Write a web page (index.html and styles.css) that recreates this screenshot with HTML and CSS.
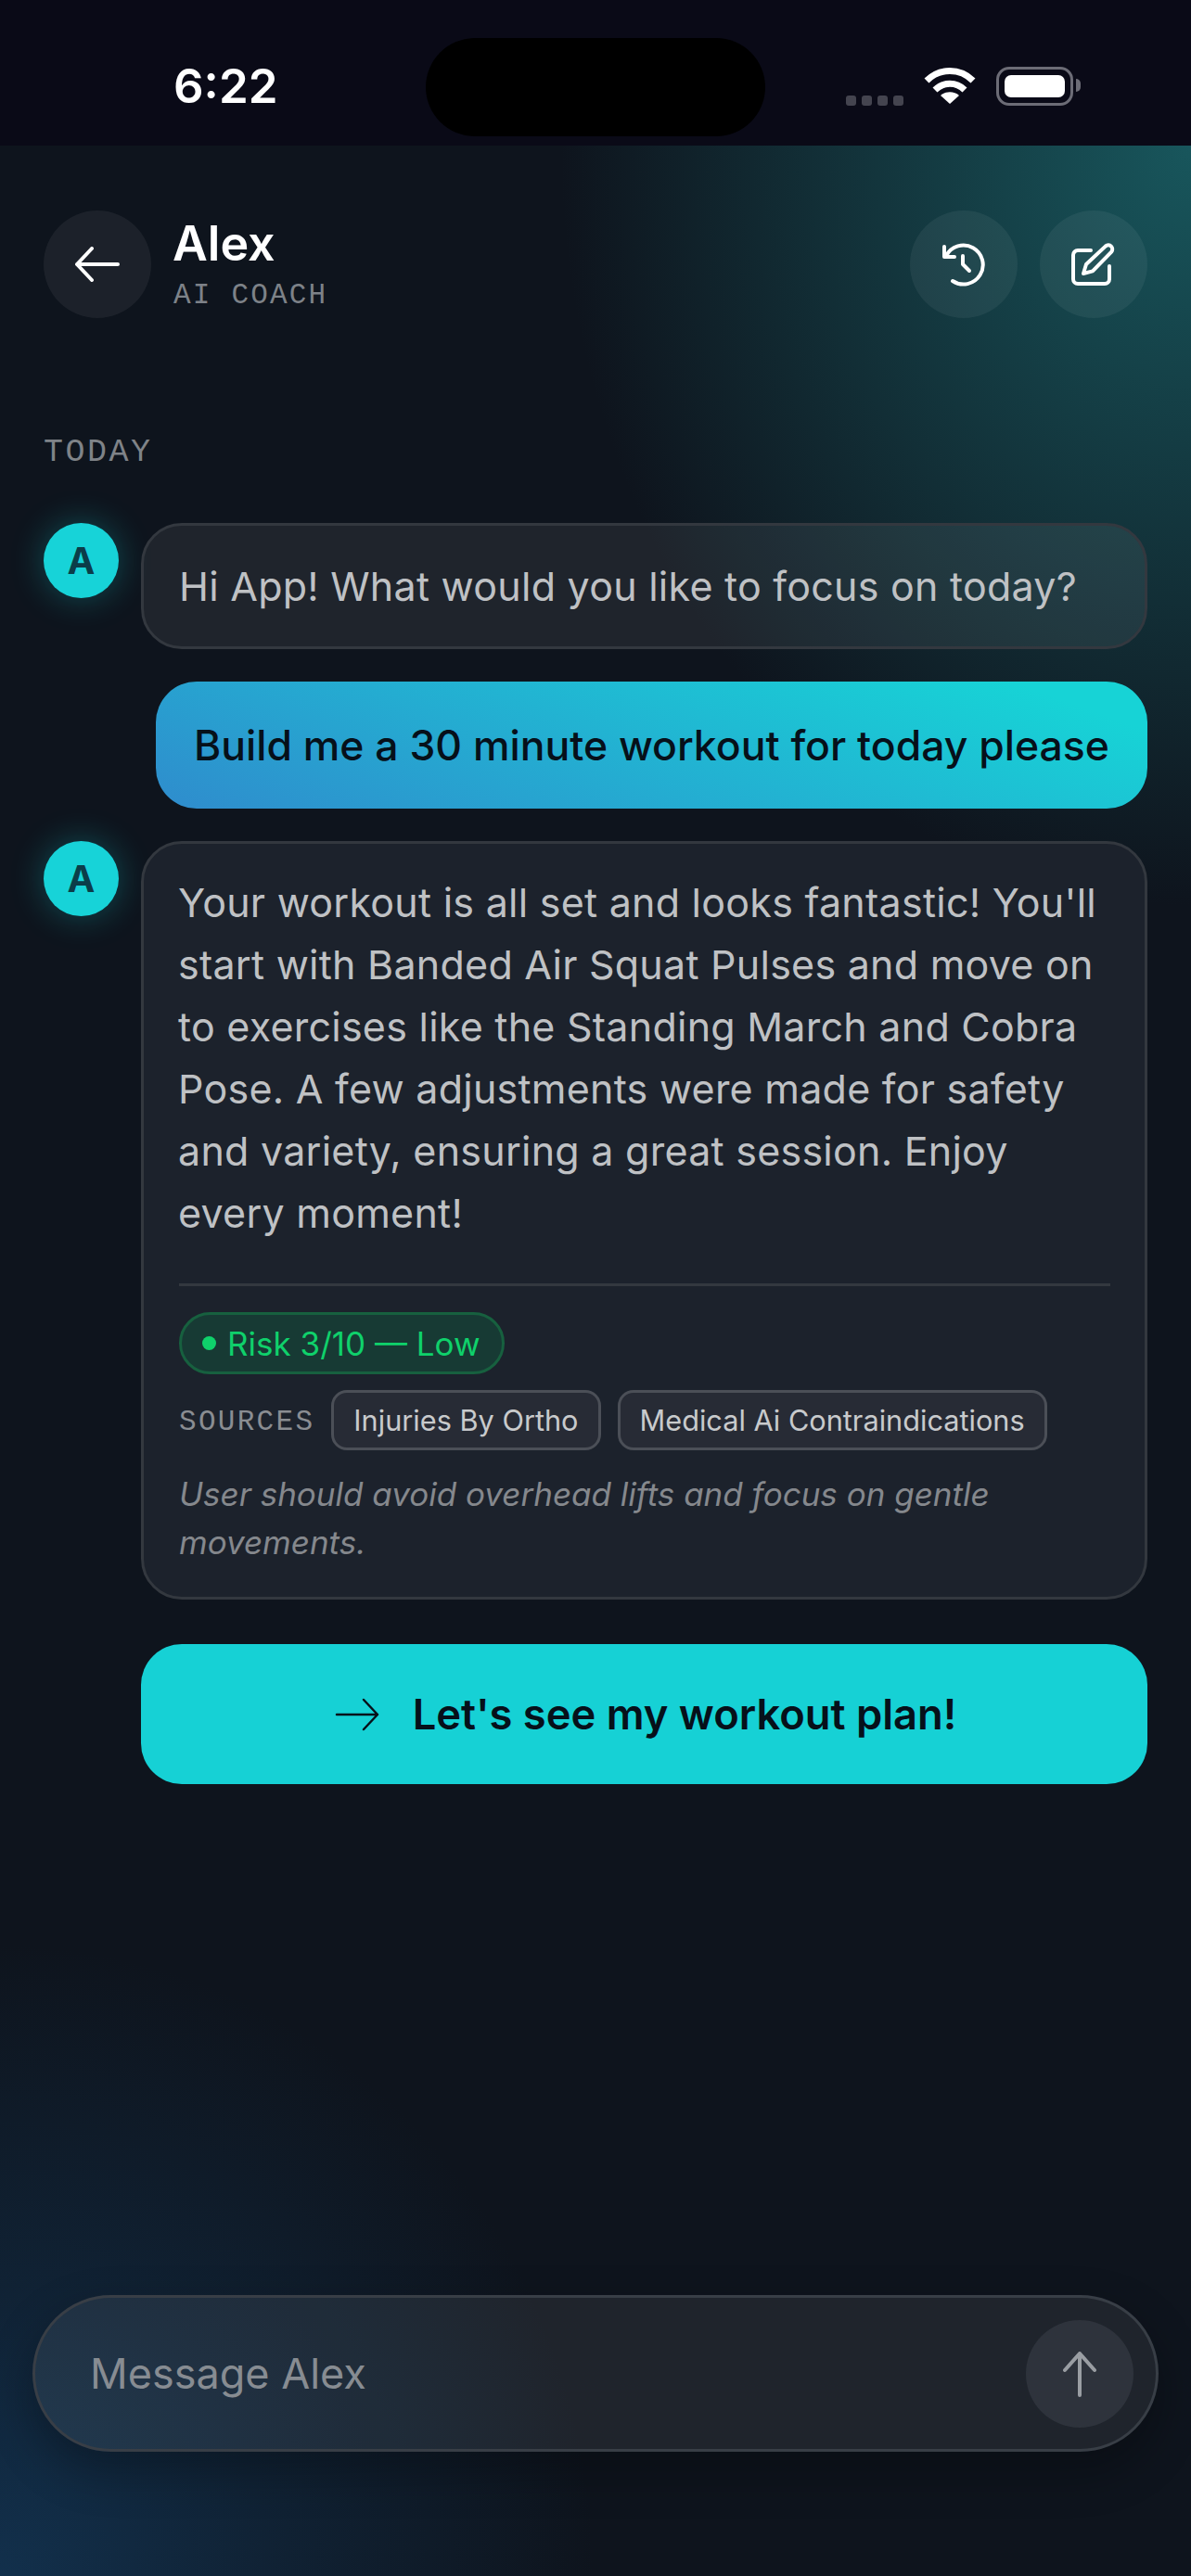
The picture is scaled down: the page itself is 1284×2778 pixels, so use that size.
FILE: index.html
```html
<!DOCTYPE html>
<html lang="en">
<head>
    <meta charset="UTF-8">
    <meta name="viewport" content="width=device-width, initial-scale=1.0">
    <link rel="stylesheet" href="styles.css">
    <title>Alex - AI Coach</title>
</head>
<body>
    <div class="status-bar">
        <div class="time">6:22</div>
        <div class="island"></div>
        <div class="status-icons">
            <div class="signal"><span></span><span></span><span></span><span></span></div>
            <svg class="wifi" viewBox="0 0 56 40">
                <path d="M3 15C17 1 39 1 53 15" fill="none" stroke="#fff" stroke-width="7"/>
                <path d="M12 25C21 16 35 16 44 25" fill="none" stroke="#fff" stroke-width="7"/>
                <path d="M28 40L18 31C23 26 33 26 38 31Z" fill="#fff"/>
            </svg>
            <div class="battery"><div class="battery-level"></div></div>
        </div>
    </div>

    <div class="chat">
        <header class="chat-header">
            <button class="round-btn back-btn">
                <svg width="50" height="38" viewBox="0 0 50 38" fill="none" stroke="#fff" stroke-width="4" stroke-linecap="round" stroke-linejoin="round">
                    <path d="M47 19H3M19 2L3 19l16 17"/>
                </svg>
            </button>
            <div class="coach">
                <div class="coach-name">Alex</div>
                <div class="coach-role">AI COACH</div>
            </div>
            <button class="round-btn">
                <svg width="48" height="48" viewBox="0 0 24 24" fill="none" stroke="#fff" stroke-width="2" stroke-linecap="round" stroke-linejoin="round">
                    <path d="M2.5 7.5A10.5 10.5 0 1 1 6 21"/>
                    <path d="M1.5 2.5V8H7"/>
                    <path d="M11.5 7.5V12L15 15.5"/>
                </svg>
            </button>
            <button class="round-btn">
                <svg width="48" height="48" viewBox="0 0 24 24" fill="none" stroke="#fff" stroke-width="2" stroke-linecap="round" stroke-linejoin="round">
                    <path d="M10.5 4.5H3.5A2.5 2.5 0 0 0 1 7V20A2.5 2.5 0 0 0 3.5 22.5H18A2.5 2.5 0 0 0 20.5 20V13"/>
                    <path d="M6.5 17L8 12L18.5 2.2A2.2 2.2 0 0 1 21.6 5.3L11.5 15.7Z"/>
                </svg>
            </button>
        </header>

        <div class="day-label">TODAY</div>

        <div class="message">
            <div class="avatar">A</div>
            <div class="bubble bubble-short">Hi App! What would you like to focus on today?</div>
        </div>

        <div class="user-bubble">Build me a 30 minute workout for today please</div>

        <div class="message">
            <div class="avatar">A</div>
            <div class="bubble bubble-long">
                <p class="reply">Your workout is all set and looks fantastic! You'll<br>start with Banded Air Squat Pulses and move on<br>to exercises like the Standing March and Cobra<br>Pose. A few adjustments were made for safety<br>and variety, ensuring a great session. Enjoy<br>every moment!</p>
                <div class="divider"></div>
                <div class="risk"><span class="risk-dot"></span>Risk 3/10 — Low</div>
                <div class="sources">
                    <span class="sources-label">SOURCES</span>
                    <span class="chip">Injuries By Ortho</span>
                    <span class="chip">Medical Ai Contraindications</span>
                </div>
                <p class="note">User should avoid overhead lifts and focus on gentle<br>movements.</p>
            </div>
        </div>

        <button class="plan-btn">
            <svg width="49" height="36" viewBox="0 0 49 36" fill="none" stroke="#07101a" stroke-width="2.5" stroke-linecap="round" stroke-linejoin="round">
                <path d="M2 18H46M31 2L46 18L31 34"/>
            </svg>
            Let's see my workout plan!
        </button>

        <div class="composer">
            <span class="placeholder">Message Alex</span>
            <button class="send-btn">
                <svg width="38" height="50" viewBox="0 0 38 50" fill="none" stroke="#9a9ea3" stroke-width="4" stroke-linecap="round" stroke-linejoin="round">
                    <path d="M19 48V3M3 21L19 3l16 18"/>
                </svg>
            </button>
        </div>
    </div>
</body>
</html>
```

FILE: styles.css
```css
* {
    box-sizing: border-box;
}

body {
    margin: 0;
    width: 1284px;
    height: 2778px;
    display: flex;
    flex-direction: column;
    font-family: 'Inter', 'Liberation Sans', sans-serif;
    color: #fff;
    background-color: #0e141d;
    background-image:
        radial-gradient(680px 820px at 100% 157px, #18565c 0%, rgba(24, 86, 92, 0.55) 45%, rgba(24, 86, 92, 0) 100%),
        radial-gradient(640px 680px at 0% 100%, #12304c 0%, rgba(18, 48, 76, 0.5) 45%, rgba(18, 48, 76, 0) 100%);
}

button {
    border: none;
    padding: 0;
    font-family: inherit;
}

.status-bar {
    height: 157px;
    flex-shrink: 0;
    display: grid;
    grid-template-columns: 1fr 366px 1fr;
    padding-top: 41px;
    background-color: #0a0a17;
}

.time {
    padding: 22px 0 0 187px;
    font-size: 51px;
    line-height: 60px;
    font-weight: 600;
}

.island {
    height: 106px;
    border-radius: 53px;
    background-color: #000;
}

.status-icons {
    display: flex;
    align-items: flex-start;
    padding: 31px 0 0 87px;
}

.signal {
    display: flex;
    gap: 6px;
    margin-top: 31px;
    margin-right: 22px;
}

.signal span {
    width: 11px;
    height: 11px;
    border-radius: 3px;
    background-color: #44444f;
}

.wifi {
    width: 56px;
    height: 40px;
    margin-right: 22px;
}

.battery {
    position: relative;
    width: 83px;
    height: 42px;
    padding: 6px;
    border: 3px solid #6c6c76;
    border-radius: 14px;
}

.battery::after {
    content: '';
    position: absolute;
    right: -11px;
    top: 10px;
    width: 5px;
    height: 14px;
    border-radius: 0 5px 5px 0;
    background-color: #6c6c76;
}

.battery-level {
    height: 100%;
    border-radius: 7px;
    background-color: #fff;
}

.chat {
    flex: 1;
    display: flex;
    flex-direction: column;
    padding: 70px 47px 134px;
}

.chat-header {
    display: flex;
    align-items: center;
    gap: 24px;
}

.round-btn {
    width: 116px;
    height: 116px;
    border-radius: 50%;
    display: flex;
    align-items: center;
    justify-content: center;
    background-color: rgba(255, 255, 255, 0.06);
}

.coach {
    flex: 1;
    margin-top: -1px;
}

.coach-name {
    font-size: 52px;
    line-height: 60px;
    font-weight: 600;
    margin-left: -1px;
}

.coach-role {
    margin-top: 8px;
    font-family: 'Liberation Mono', monospace;
    font-size: 31px;
    line-height: 36px;
    letter-spacing: 2.2px;
    color: #7d8288;
}

.day-label {
    margin-top: 125px;
    font-family: 'Liberation Mono', monospace;
    font-size: 35px;
    line-height: 40px;
    letter-spacing: 2.5px;
    color: #7f8388;
}

.message {
    display: flex;
    gap: 24px;
}

.day-label + .message {
    margin-top: 56px;
}

.avatar {
    width: 81px;
    height: 81px;
    flex-shrink: 0;
    border-radius: 50%;
    display: flex;
    align-items: center;
    justify-content: center;
    font-size: 40px;
    font-weight: 700;
    color: #0b3d49;
    background-color: #17d3d8;
    box-shadow: 0 0 36px rgba(23, 211, 216, 0.3);
}

.bubble {
    flex: 1;
    border: 3px solid #33383f;
    border-radius: 44px;
    color: #bfc1c4;
    font-size: 43px;
    letter-spacing: 0.25px;
}

.bubble-short {
    height: 136px;
    padding: 0 37px 0 38px;
    display: flex;
    align-items: center;
    background-color: rgba(255, 255, 255, 0.07);
}

.bubble-long {
    padding: 30px 37px 0 38px;
    height: 818px;
    background-color: #1c222c;
}

.user-bubble {
    align-self: flex-end;
    width: 1069px;
    height: 137px;
    margin: 35px 0;
    padding-left: 41px;
    display: flex;
    align-items: center;
    border-radius: 44px;
    font-size: 44.5px;
    font-weight: 500;
    color: #06101a;
    background: linear-gradient(200deg, #17d3d6 10%, #2f8ccd 100%);
}

.reply {
    margin: 0 0 0 -1px;
    line-height: 67px;
}

.divider {
    height: 3px;
    margin-top: 42px;
    background-color: #33383f;
}

.risk {
    display: inline-flex;
    align-items: center;
    gap: 12px;
    height: 67px;
    margin-top: 28px;
    padding: 0 23px 0 22px;
    border: 3px solid #17603f;
    border-radius: 34px;
    font-size: 35px;
    letter-spacing: 0;
    color: #0fd16b;
    background-color: #173a34;
}

.risk-dot {
    width: 15px;
    height: 15px;
    border-radius: 50%;
    background-color: #0fd16b;
}

.sources {
    display: flex;
    align-items: center;
    gap: 18px;
    margin-top: 17px;
    letter-spacing: 0;
}

.sources-label {
    padding-top: 3px;
    font-family: 'Liberation Mono', monospace;
    font-size: 31px;
    letter-spacing: 2.3px;
    color: #8a8d92;
}

.chip {
    height: 65px;
    padding: 0 21px;
    display: flex;
    align-items: center;
    border: 3px solid #4b4f57;
    border-radius: 17px;
    font-size: 30.7px;
    color: #c8cacc;
    background-color: #272b35;
}

.note {
    margin: 21px 0 0;
    font-size: 35px;
    line-height: 52px;
    font-style: italic;
    letter-spacing: 0;
    color: #85888d;
}

.plan-btn {
    align-self: flex-end;
    width: 1085px;
    height: 151px;
    margin-top: 48px;
    padding-left: 3px;
    display: flex;
    align-items: center;
    justify-content: center;
    gap: 35px;
    border-radius: 44px;
    font-size: 45.3px;
    font-weight: 600;
    color: #06101a;
    background-color: #16d1d5;
}

.composer {
    height: 169px;
    margin: auto -12px 0;
    padding: 0 24px 0 59px;
    display: flex;
    align-items: center;
    justify-content: space-between;
    border: 3px solid #383e46;
    border-radius: 85px;
    background-color: rgba(255, 255, 255, 0.07);
    box-shadow: 0 20px 50px rgba(0, 0, 0, 0.3);
}

.placeholder {
    font-size: 45px;
    color: #878c92;
}

.send-btn {
    width: 116px;
    height: 116px;
    border-radius: 50%;
    display: flex;
    align-items: center;
    justify-content: center;
    background-color: #2e333c;
}
```
